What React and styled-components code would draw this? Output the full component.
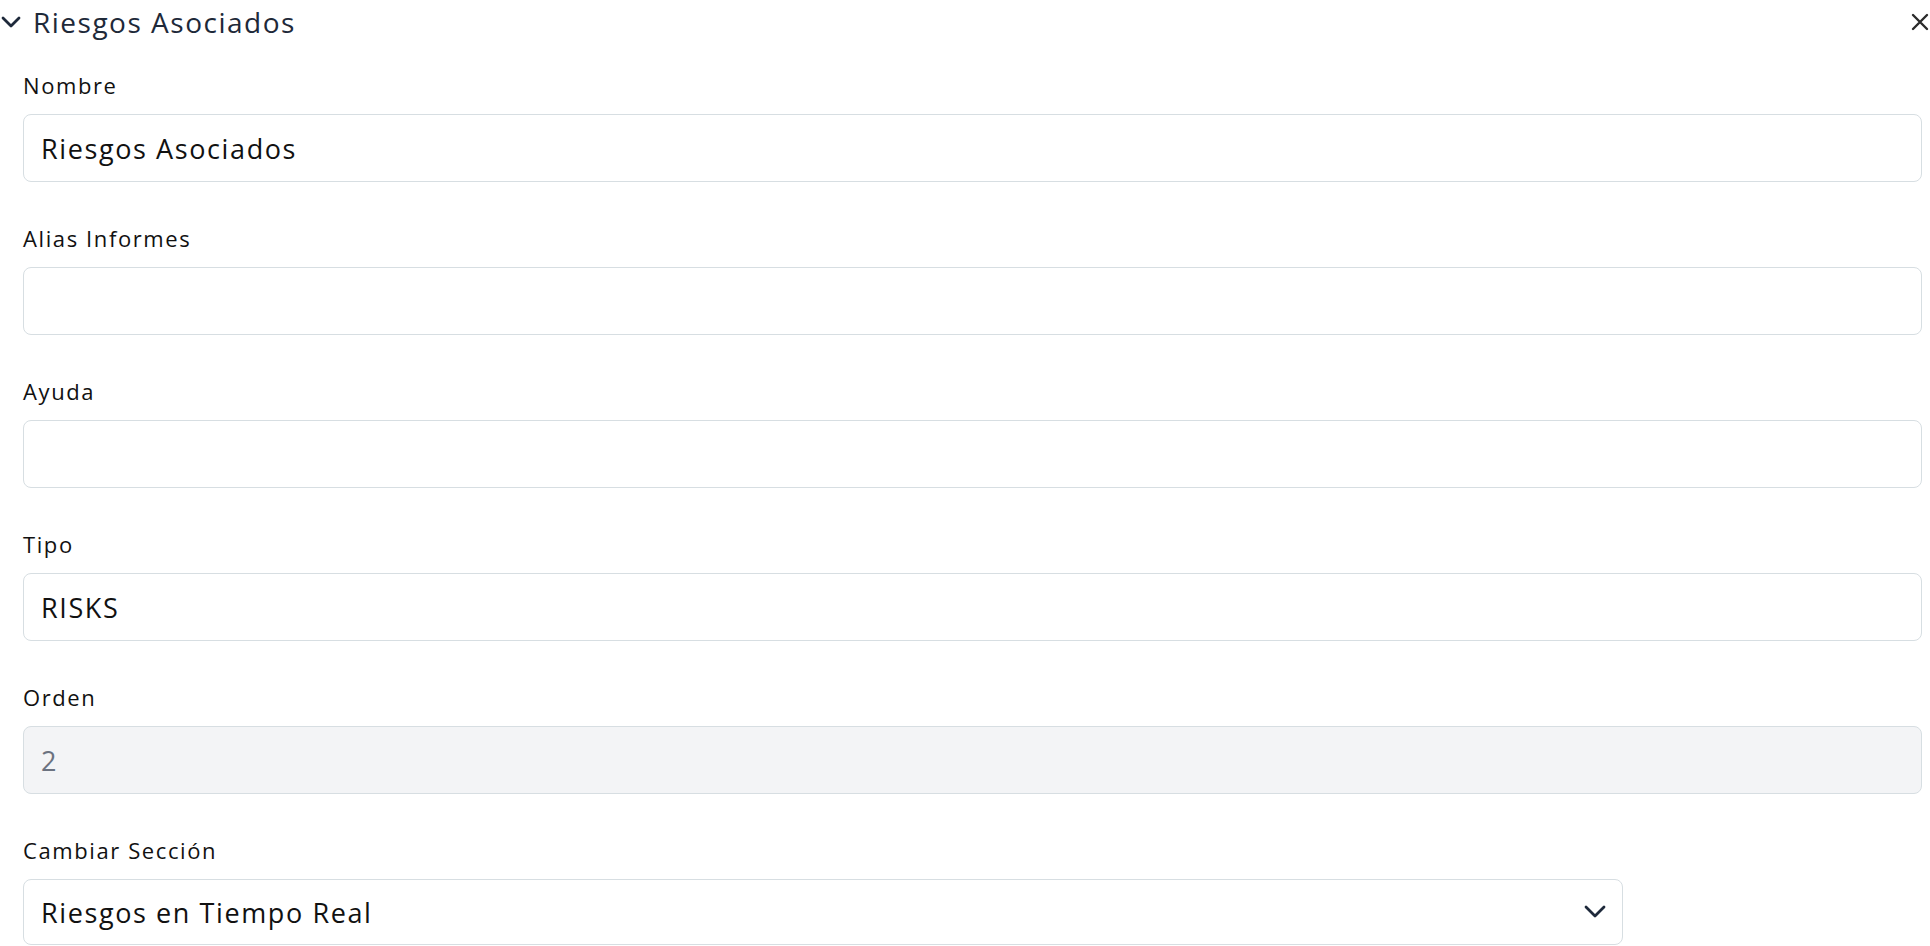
import React from 'react'
import styled, { createGlobalStyle } from 'styled-components'

const GlobalStyle = createGlobalStyle`
    body {
        margin: 0;
        background: #ffffff;
        font-family: "Open Sans", "Liberation Sans", sans-serif;
    }
`

const Panel = styled.div`
    display: flex;
    flex-direction: column;
    width: 1930px;
`

const Header = styled.div`
    display: flex;
    align-items: center;
    height: 44px;
    padding: 0 1px 0 1px;
`

const Title = styled.span`
    flex: 1;
    margin-left: 12px;
    font-size: 28px;
    letter-spacing: 1.5px;
    color: #1e2939;
`

const Form = styled.div`
    display: flex;
    flex-direction: column;
    gap: 41px;
    padding: 26px 8px 0 23px;
`

const Field = styled.div`
    display: flex;
    flex-direction: column;
    gap: 14px;
`

const Label = styled.label`
    height: 30px;
    line-height: 30px;
    font-size: 22px;
    letter-spacing: 1.6px;
    color: #111111;
`

const Input = styled.div`
    box-sizing: border-box;
    display: flex;
    align-items: center;
    width: ${props => props.width || '100%'};
    height: ${props => props.height || '68px'};
    padding: 0 16px 0 17px;
    border: 1.5px solid #d7dee2;
    border-radius: 8px;
    background: ${props => props.disabled ? '#f3f4f6' : '#ffffff'};
    color: ${props => props.disabled ? '#6b7280' : '#111111'};
    font-size: 27px;
    letter-spacing: 1.6px;
`

const Value = styled.span`
    flex: 1;
`

const Icon = ({ d, w, h, stroke = '#1e293b', sw = 2.6 }) => (
    <svg width={w} height={h} viewBox={`0 0 ${w} ${h}`} fill="none">
        <path d={d} stroke={stroke} strokeWidth={sw} strokeLinecap="round" strokeLinejoin="round" />
    </svg>
)

const fields = [
    { label: 'Nombre', value: 'Riesgos Asociados' },
    { label: 'Alias Informes', value: '' },
    { label: 'Ayuda', value: '' },
    { label: 'Tipo', value: 'RISKS' },
    { label: 'Orden', value: '2', disabled: true },
]

class App extends React.Component {
    render() {
        return (
            <Panel>
                <GlobalStyle />
                <Header>
                    <Icon w={20} h={12} d="M2 2 L10 10 L18 2" sw={2.8} />
                    <Title>Riesgos Asociados</Title>
                    <Icon w={18} h={18} d="M2 2 L16 16 M16 2 L2 16" stroke="#2b2b2b" sw={2.4} />
                </Header>
                <Form>
                    {fields.map(f => (
                        <Field key={f.label}>
                            <Label>{f.label}</Label>
                            <Input disabled={f.disabled}>
                                <Value>{f.value}</Value>
                            </Input>
                        </Field>
                    ))}
                    <Field>
                        <Label>Cambiar Sección</Label>
                        <Input width="1600px" height="66px">
                            <Value>Riesgos en Tiempo Real</Value>
                            <Icon w={22} h={14} d="M2 2 L11 11 L20 2" sw={2.8} />
                        </Input>
                    </Field>
                </Form>
            </Panel>
        )
    }
}

export default App
